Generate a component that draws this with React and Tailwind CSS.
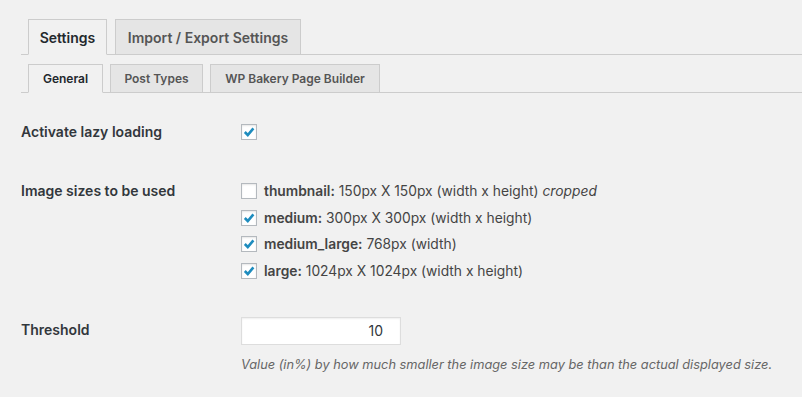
import React from "react";

const font = { fontFamily: "Inter, 'Liberation Sans', sans-serif" };

function Tab({ children, active, className = "" }) {
  if (active) {
    return (
      <div
        className={`flex items-center justify-center border border-[#ccc] border-b-[#f1f1f1] bg-[#f1f1f1] text-[#23282d] -mb-px ${className}`}
      >
        {children}
      </div>
    );
  }
  return (
    <div
      className={`flex items-center justify-center border border-b-0 border-[#ccc] bg-[#e5e5e5] text-[#555] ${className}`}
    >
      {children}
    </div>
  );
}

function Checkbox({ checked }) {
  return (
    <span className="flex size-4 shrink-0 items-center justify-center border border-[#b4b9be] bg-white shadow-[inset_0_1px_2px_rgba(0,0,0,0.1)]">
      {checked && (
        <svg width="14" height="14" viewBox="0 0 14 14">
          <path
            d="M2.8 7 L5.8 10 L11.4 3.4"
            fill="none"
            stroke="#1e8cbe"
            strokeWidth="2.6"
          />
        </svg>
      )}
    </span>
  );
}

export default function App() {
  const sizes = [
    { name: "thumbnail:", desc: "150px X 150px (width x height)", extra: "cropped", checked: false },
    { name: "medium:", desc: "300px X 300px (width x height)", checked: true },
    { name: "medium_large:", desc: "768px (width)", checked: true },
    { name: "large:", desc: "1024px X 1024px (width x height)", checked: true },
  ];

  return (
    <div className="min-h-[397px] w-full bg-[#f1f1f1] pl-[21px] pt-[19px]" style={font}>
      {/* main tabs */}
      <div className="flex items-end gap-2 border-b border-[#ccc] pl-[7px]">
        <Tab active className="h-[36px] w-[79px] text-[14px] font-semibold">
          Settings
        </Tab>
        <Tab className="h-[35px] w-[186px] text-[14px] font-semibold">
          Import / Export Settings
        </Tab>
      </div>

      {/* sub tabs */}
      <div className="mt-[9px] flex items-end gap-[7px] border-b border-[#ccc] pl-[7px]">
        <Tab active className="h-[29px] w-[75px] text-[12px] font-semibold">
          General
        </Tab>
        <Tab className="h-[28px] w-[93px] text-[12px] font-semibold">
          Post Types
        </Tab>
        <Tab className="h-[28px] w-[170px] text-[12px] font-semibold">
          WP Bakery Page Builder
        </Tab>
      </div>

      {/* form */}
      <div className="mt-[29px] flex items-start leading-5">
        <div className="w-[220px] text-[14px] font-semibold text-[#32373c]">
          Activate lazy loading
        </div>
        <div className="mt-[2px]">
          <Checkbox checked />
        </div>
      </div>

      <div className="mt-[39px] flex items-start leading-5">
        <div className="w-[220px] text-[14px] font-semibold text-[#32373c]">
          Image sizes to be used
        </div>
        <div className="flex flex-col gap-[6.5px]">
          {sizes.map((s) => (
            <div key={s.name} className="flex h-5 items-center gap-[7px] text-[13.8px] text-[#444]">
              <Checkbox checked={s.checked} />
              <span>
                <b className="font-semibold">{s.name}</b> {s.desc}
                {s.extra && <i> {s.extra}</i>}
              </span>
            </div>
          ))}
        </div>
      </div>

      <div className="mt-[36px] flex items-start">
        <div className="mt-[3px] w-[220px] text-[14px] font-semibold leading-5 text-[#32373c]">
          Threshold
        </div>
        <div>
          <input
            type="text"
            readOnly
            value="10"
            className="h-[28px] w-[160px] border border-[#ddd] bg-white pr-[17px] text-right text-[14px] text-[#32373c] shadow-[inset_0_1px_2px_rgba(0,0,0,0.07)] outline-none"
            style={font}
          />
          <p className="mt-[11px] text-[12.8px] italic leading-[18px] text-[#666]">
            Value (in%) by how much smaller the image size may be than the actual displayed size.
          </p>
        </div>
      </div>
    </div>
  );
}
